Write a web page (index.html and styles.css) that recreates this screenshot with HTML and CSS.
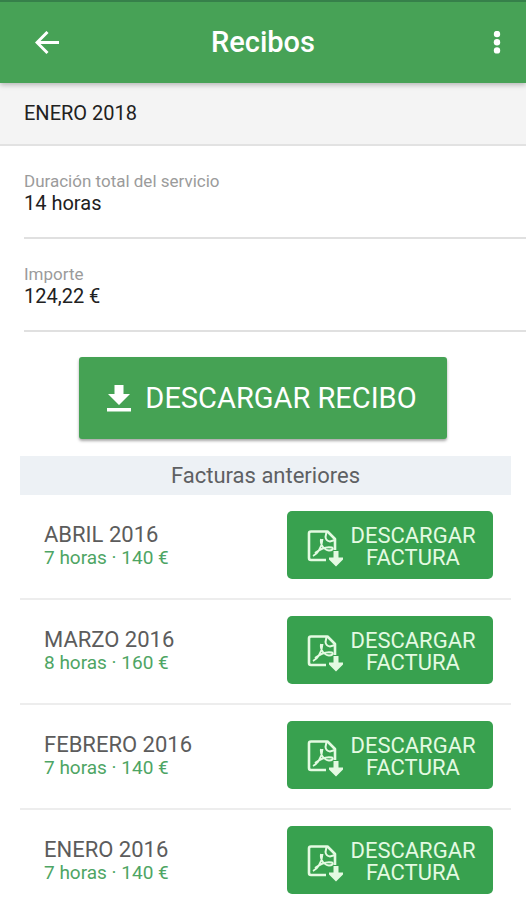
FILE: index.html
```
<!DOCTYPE html>
<html lang="es">
<head>
<meta charset="utf-8">
<meta name="viewport" content="width=device-width, initial-scale=1">
<title>Recibos</title>
<link rel="stylesheet" href="styles.css">
</head>
<body>
<svg class="sprite" aria-hidden="true">
  <symbol id="pdf" viewBox="0 0 36 40">
    <path d="M28 23V12L20.500 4.500H4Q2 4.500 2 6.500V31Q2 33 4 33H19" fill="none" stroke="currentColor" stroke-width="2.600" stroke-linejoin="round"/>
    <path d="M19.500 5L18.500 10Q19 14 23 14.500L28 13" fill="none" stroke="currentColor" stroke-width="2"/>
    <path d="M6 29C10 27 15 21 15.500 12M14 12C13 18 17 23 22 23.500C25 23.500 27 22 25 20.500C20 19.500 13 22 8 26" fill="none" stroke="currentColor" stroke-width="1.900"/>
    <path d="M26.500 24H31.500V30.500H36V32.500L29 39.500L22 32.500V30.500H26.500Z" fill="currentColor"/>
  </symbol>
</svg>
<header class="bar">
  <button class="bar-button" type="button" aria-label="Volver">
    <svg width="24" height="24" viewBox="0 0 24 24"><path d="M24 11.500H2M12.500 1L2 11.500L12.500 22" fill="none" stroke="currentColor" stroke-width="3"/></svg>
  </button>
  <h1>Recibos</h1>
  <button class="bar-button more" type="button" aria-label="Más opciones">
    <svg width="8" height="24" viewBox="0 0 8 24" fill="currentColor"><circle cx="4" cy="3" r="3.200"/><circle cx="4" cy="11.200" r="3.200"/><circle cx="4" cy="19.400" r="3.200"/></svg>
  </button>
</header>
<main>
  <h2 class="period">ENERO 2018</h2>
  <dl class="details">
    <div class="detail"><dt>Duración total del servicio</dt><dd>14 horas</dd></div>
    <div class="detail"><dt>Importe</dt><dd>124,22 €</dd></div>
  </dl>
  <button class="download" type="button">
    <svg width="24" height="28" viewBox="0 0 24 28" fill="currentColor" aria-hidden="true"><path d="M7.500 1H16.500V10H23L12 21L1 10H7.500ZM0 24H24V27.500H0Z"/></svg>
    DESCARGAR RECIBO
  </button>
  <section class="previous">
    <h2 class="previous-title">Facturas anteriores</h2>
    <ul class="invoices">
      <li class="invoice">
        <div class="info"><h3>ABRIL 2016</h3><p>7 horas · 140 €</p></div>
        <button class="invoice-button" type="button"><svg width="36" height="40" aria-hidden="true"><use href="#pdf"/></svg><span>DESCARGAR FACTURA</span></button>
      </li>
      <li class="invoice">
        <div class="info"><h3>MARZO 2016</h3><p>8 horas · 160 €</p></div>
        <button class="invoice-button" type="button"><svg width="36" height="40" aria-hidden="true"><use href="#pdf"/></svg><span>DESCARGAR FACTURA</span></button>
      </li>
      <li class="invoice">
        <div class="info"><h3>FEBRERO 2016</h3><p>7 horas · 140 €</p></div>
        <button class="invoice-button" type="button"><svg width="36" height="40" aria-hidden="true"><use href="#pdf"/></svg><span>DESCARGAR FACTURA</span></button>
      </li>
      <li class="invoice">
        <div class="info"><h3>ENERO 2016</h3><p>7 horas · 140 €</p></div>
        <button class="invoice-button" type="button"><svg width="36" height="40" aria-hidden="true"><use href="#pdf"/></svg><span>DESCARGAR FACTURA</span></button>
      </li>
    </ul>
  </section>
</main>
</body>
</html>
```
FILE: styles.css
```
* {
  box-sizing: border-box;
}

body {
  margin: 0;
  background: #fff;
  color: #212121;
  font-family: Roboto, "Liberation Sans", sans-serif;
}

h1, h2, h3, p, dl, dd, ul {
  margin: 0;
  padding: 0;
  font-weight: 400;
}

button {
  border: 0;
  font: inherit;
  color: #fff;
  cursor: pointer;
}

svg {
  display: block;
  flex: none;
}

.sprite {
  display: none;
}

.bar {
  position: relative;
  display: grid;
  grid-template-columns: 64px 1fr 64px;
  align-items: center;
  padding: 12px 0;
  border-top: 2px solid #36804a;
  background: #47a256;
  color: #fff;
  box-shadow: 0 2px 5px rgba(0, 0, 0, 0.25);
}

.bar h1 {
  font-size: 29px;
  line-height: 57px;
  font-weight: 500;
  text-align: center;
}

.bar-button {
  display: flex;
  padding: 16px 4px 16px 35px;
  background: none;
}

.more {
  padding: 16px 24px 16px 31px;
}

.period {
  padding: 16px 24px;
  border-bottom: 2px solid #e2e2e2;
  background: #f4f4f4;
  font-size: 20px;
  line-height: 29px;
}

.details {
  padding-left: 24px;
}

.detail {
  padding: 25px 0 23px;
  border-bottom: 2px solid #e0e0e0;
}

.detail dt {
  color: #9b9b9b;
  font-size: 17px;
  line-height: 21px;
}

.detail dd {
  font-size: 20px;
  line-height: 22px;
}

.download {
  display: flex;
  align-items: center;
  gap: 14px;
  margin: 25px auto 17px;
  padding: 0 30px 0 28px;
  border-radius: 3px;
  background: #45a254;
  box-shadow: 0 2px 3px rgba(0, 0, 0, 0.35);
  font-size: 29px;
  line-height: 82px;
}

.previous {
  margin: 0 15px 0 20px;
}

.previous-title {
  background: #edf1f5;
  color: #5e6063;
  font-size: 22px;
  line-height: 39px;
  text-align: center;
}

.invoices {
  list-style: none;
}

.invoice {
  display: flex;
  align-items: center;
  justify-content: space-between;
  padding: 16px 18px 19px 24px;
  border-bottom: 2px solid #ededed;
}

.invoice:last-child {
  padding-bottom: 4px;
  border-bottom: 0;
}

.info {
  padding-top: 2px;
}

.info h3 {
  color: #5c5c5c;
  font-size: 22px;
  line-height: 24px;
}

.info p {
  color: #4ea564;
  font-size: 19px;
  line-height: 22px;
}

.invoice-button {
  display: flex;
  align-items: center;
  justify-content: space-between;
  width: 206px;
  padding: 14px 16px 10px 20px;
  border-radius: 5px;
  background: #38a14f;
  color: #e4fae2;
}

.invoice-button span {
  width: 128px;
  font-size: 22px;
  line-height: 22px;
}
```
